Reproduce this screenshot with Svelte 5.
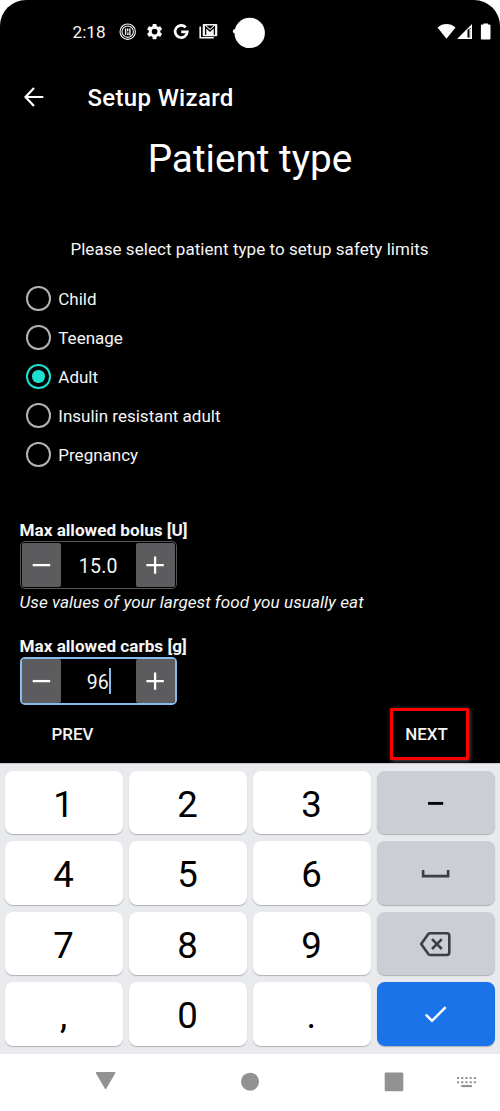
<script>
  const types = ['Child', 'Teenage', 'Adult', 'Insulin resistant adult', 'Pregnancy'];
  let selected = $state('Adult');
  const keys = ['1', '2', '3', 'minus', '4', '5', '6', 'space', '7', '8', '9', 'delete', ',', '0', '.', 'done'];
  const special = ['minus', 'space', 'delete', 'done'];
</script>

{#snippet stepper(value, active)}
  <div class="stepper" class:active>
    <button class="step" aria-label="Decrease"><svg width="20" height="20" viewBox="0 0 20 20"><path d="M1.7 10.1H19.2" /></svg></button>
    <div class="value"><span>{value}</span>{#if active}<i class="caret"></i>{/if}</div>
    <button class="step" aria-label="Increase"><svg width="20" height="20" viewBox="0 0 20 20"><path d="M1.4 10.1H18.8M10.1 1.4V18.8" /></svg></button>
  </div>
{/snippet}

<div class="phone">
  <main class="screen">
    <header class="status">
      <span class="time">2:18</span>
      <svg class="notices" width="160" height="36" viewBox="110 14 160 36">
        <g fill="none" stroke="#f2f2f2">
          <circle cx="127.7" cy="31.7" r="7.7" stroke-width="1.1" />
          <circle cx="127.7" cy="31.7" r="5.7" stroke-width="1.1" />
          <path d="M125.6 28.6V34.8M129.9 28.6V35.4M127.7 28.5V31.2M127.9 32.6V35" stroke-width="1.4" />
        </g>
        <path transform="translate(145.1 22.1) scale(.79)" fill="#fff" d="M19.14 12.94c.04-.3.06-.61.06-.94s-.02-.64-.07-.94l2.03-1.58a.49.49 0 0 0 .12-.61l-1.92-3.32a.49.49 0 0 0-.59-.22l-2.39.96a7 7 0 0 0-1.62-.94l-.36-2.54A.48.48 0 0 0 13.92 2.4h-3.84a.48.48 0 0 0-.47.41l-.36 2.54c-.59.24-1.13.57-1.62.94l-2.39-.96a.48.48 0 0 0-.59.22L2.74 8.87a.48.48 0 0 0 .12.61l2.03 1.58c-.05.3-.09.63-.09.94s.02.64.07.94l-2.03 1.58a.49.49 0 0 0-.12.61l1.92 3.32c.12.22.37.29.59.22l2.39-.96c.5.38 1.03.7 1.62.94l.36 2.54c.05.24.24.41.48.41h3.84c.24 0 .44-.17.47-.41l.36-2.54a7 7 0 0 0 1.62-.94l2.39.96c.22.08.47 0 .59-.22l1.92-3.32a.48.48 0 0 0-.12-.61zM12 15.6a3.6 3.6 0 1 1 0-7.2 3.6 3.6 0 0 1 0 7.2" />
        <path d="M185.7 27.3A6.1 6.1 0 1 0 187.3 31.9H181.2" fill="none" stroke="#fff" stroke-width="2.7" />
        <path d="M200.2 26.5V37.8H213.8" fill="none" stroke="#f5f5f5" stroke-width="1.6" />
        <rect x="202.7" y="23.9" width="14.6" height="12.3" rx="1" fill="#f5f5f5" />
        <path d="M205.6 34.8V27L210 31L214.4 27V34.8" fill="none" stroke="#000" stroke-width="1.3" />
        <path d="M206.2 25.6L210 28.8L213.8 25.6Z" fill="#000" />
        <circle cx="235.2" cy="31.2" r="2.3" fill="#fff" />
        <circle cx="249.7" cy="32.9" r="15.2" fill="#fff" />
      </svg>
      <svg class="system" width="60" height="24" viewBox="436 20 60 24" fill="#fff">
        <path d="M437.5 27.4C442.9 22.8 450.1 22.8 455.5 27.4L446.5 38.8Z" />
        <path fill-rule="evenodd" d="M457 39L472 24V39ZM467.5 29.8V37.4H470.8V28Z" />
        <path d="M469.5 29H470.8V37.6H469.5Z" />
        <path d="M483.4 24.6V23.5H488V24.6H489.4Q490.5 24.6 490.5 25.7V38.2Q490.5 39.4 489.4 39.4H482Q480.9 39.4 480.9 38.2V25.7Q480.9 24.6 482 24.6Z" />
      </svg>
    </header>

    <div class="appbar">
      <svg width="20" height="20" viewBox="0 0 20 20"><path d="M10 1L1.5 10L10 19M1.5 10H19.3" fill="none" stroke="#fff" stroke-width="2.2" /></svg>
      <span>Setup Wizard</span>
    </div>

    <h1>Patient type</h1>
    <p class="intro">Please select patient type to setup safety limits</p>

    <div class="options" role="radiogroup">
      {#each types as type}
        <button class="option" role="radio" aria-checked={selected === type} onclick={() => (selected = type)}>
          <span class="radio" class:on={selected === type}></span><span class="label">{type}</span>
        </button>
      {/each}
    </div>

    <section class="limits">
      <strong>Max allowed bolus [U]</strong>
      {@render stepper('15.0', false)}
      <em>Use values of your largest food you usually eat</em>
      <strong class="second">Max allowed carbs [g]</strong>
      {@render stepper('96', true)}
    </section>

    <div class="actions">
      <button class="prev">PREV</button>
      <button class="next">NEXT</button>
    </div>
  </main>

  <div class="keyboard">
    {#each keys as key}
      <button class="key" class:grey={special.includes(key)} class:done={key === 'done'} aria-label={key}>
        {#if key === 'minus'}
          <svg width="36" height="30" viewBox="0 0 36 30"><path d="M10 16.4H25.2" stroke="#050505" stroke-width="2.9" /></svg>
        {:else if key === 'space'}
          <svg width="36" height="30" viewBox="0 0 36 30"><path d="M5.1 11.9V18.1H30.1V11.9" fill="none" stroke="#3c3e41" stroke-width="2.6" /></svg>
        {:else if key === 'delete'}
          <svg width="36" height="30" viewBox="0 0 36 30"><path d="M11.9 5.2H28.9Q31.3 5.2 31.3 7.6V24.6Q31.3 27 28.9 27H11.9Q10.9 27 10.3 26.1L3.2 16.1L10.3 6.1Q10.9 5.2 11.9 5.2ZM14 11.2L23.8 21M23.8 11.2L14 21" fill="none" stroke="#3c3e41" stroke-width="2.6" /></svg>
        {:else if key === 'done'}
          <svg width="36" height="30" viewBox="0 0 36 30"><path d="M7.8 15.6L14 21.8L27.7 8.1" fill="none" stroke="#fff" stroke-width="2.5" /></svg>
        {:else}{key}{/if}
      </button>
    {/each}
  </div>

  <nav>
    <svg width="500" height="57" viewBox="0 1054 500 57" fill="#929292">
      <path d="M96.5 1072.8H114.7L105.6 1088.3Z" stroke="#929292" stroke-width="1.4" stroke-linejoin="round" />
      <circle cx="250" cy="1081.7" r="9" />
      <rect x="384.7" y="1072.4" width="18.6" height="18.8" rx="1.2" />
      <path d="M457 1078H476.5M457 1082.2H476.5" stroke="#929292" stroke-width="2.1" stroke-dasharray="2.1 2.1" />
      <rect x="461.3" y="1085" width="10.6" height="2.1" />
    </svg>
  </nav>
</div>

<style>
  :global(body) { margin: 0; background: #fff; }
  .phone { width: 500px; height: 1111px; display: flex; flex-direction: column; overflow: hidden; background: #fff; font-family: Roboto, sans-serif; color: #f5f5f5; }
  button { border: 0; padding: 0; margin: 0; background: none; color: inherit; font: inherit; }
  svg { display: block; flex: none; }
  .screen { height: 763px; flex: none; background: #000; border-radius: 26px 26px 0 0; display: flex; flex-direction: column; }
  .status { height: 64px; display: flex; align-items: center; padding: 0 4px 0 72.5px; flex: none; }
  .time { width: 37.5px; font-size: 17.2px; line-height: 20px; }
  .system { margin-left: auto; }
  .appbar { height: 66px; flex: none; display: flex; align-items: center; gap: 43.5px; padding-left: 24px; font-size: 24px; letter-spacing: .33px; font-weight: 500; color: #fff; }
  .appbar span { padding-top: 2px; }
  h1 { margin: 0; height: 58px; line-height: 58px; text-align: center; font-size: 38.7px; font-weight: 400; color: #fff; flex: none; }
  .intro { margin: 50px 0 0; height: 23px; line-height: 23px; text-align: center; font-size: 17px; letter-spacing: .05px; padding-right: 1px; flex: none; }
  .options { margin-top: 18px; display: flex; flex-direction: column; flex: none; }
  .option { height: 39px; display: flex; align-items: center; gap: 7.5px; padding-left: 26.3px; font-size: 17px; }
  .label { padding-top: 1px; }
  .radio { box-sizing: border-box; width: 24.5px; height: 24.5px; border: 2.4px solid #b2b2b2; border-radius: 50%; display: grid; place-items: center; }
  .radio.on { border-color: #1de0cf; }
  .radio.on::after { content: ''; width: 12.4px; height: 12.4px; border-radius: 50%; background: #1de0cf; }
  .limits { margin-top: 45px; padding-left: 19.5px; display: flex; flex-direction: column; align-items: flex-start; flex: none; }
  strong { height: 22px; line-height: 22px; font-size: 17.15px; font-weight: 700; }
  em { height: 25px; line-height: 26px; font-size: 17.1px; letter-spacing: .04px; }
  strong.second { margin-top: 21px; }
  .stepper { box-sizing: border-box; width: 157.5px; height: 48px; border: 1px solid #555; border-radius: 5px; padding: 1px; display: flex; }
  .stepper.active { border: 2px solid #86bdee; padding: 0; }
  .step { width: 39.5px; background: #5c5c5e; border-radius: 2px; display: grid; place-items: center; }
  .step path { stroke: #fff; stroke-width: 2.3; }
  .value { flex: 1; display: flex; align-items: center; justify-content: center; font-size: 19.5px; letter-spacing: .3px; }
  .value span { padding-top: 2px; }
  .active .value { padding-left: 1px; letter-spacing: 0; }
  .caret { width: 2px; height: 26px; background: #86bdee; }
  .actions { display: flex; align-items: flex-start; justify-content: space-between; padding: 3px 31px 0 51.5px; font-size: 16.9px; font-weight: 500; }
  .prev { height: 52px; }
  .next { box-sizing: border-box; width: 79px; height: 51.5px; border: 3px solid #f00; padding: 1px 6px 0 0; border-radius: 1px; box-shadow: 1px 1px 4px #555; }
  .keyboard { box-sizing: border-box; height: 290.5px; flex: none; background: #e8eaed; border-top: 1px solid #c5c7ca; padding: 6.5px 5px 8px; display: grid; grid-template-columns: repeat(4, 1fr); grid-template-rows: repeat(4, 63.5px); gap: 7px 5.6px; }
  .key { display: flex; align-items: center; justify-content: center; background: #fff; border-radius: 8px; box-shadow: 0 1px 1px #aeb0b3; color: #000; font-size: 36.6px; line-height: 44px; padding-top: 5px; padding-right: 1px; }
  .grey { background: #cbced5; padding: 0; }
  .done { background: #1a73e8; }
  nav { height: 57px; flex: none; }
</style>
